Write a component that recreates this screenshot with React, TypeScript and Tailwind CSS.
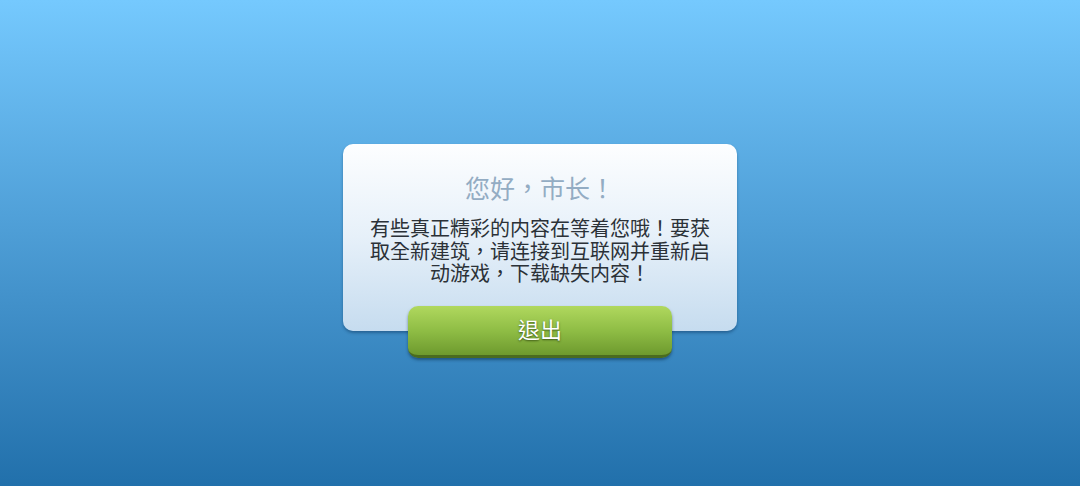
export default function App() {
  return (
    <div
      className="flex h-[486px] w-[1080px] flex-col items-center bg-gradient-to-b from-[#75c9fe] to-[#2170ab] pt-[144px]"
      style={{ fontFamily: '"Noto Sans CJK TC", "Noto Sans CJK SC", sans-serif' }}
    >
      {/* Dialog card */}
      <div className="flex h-[187px] w-[394px] flex-col items-center rounded-[10px] bg-gradient-to-b from-[#fdfeff] via-[#e6f0f9] to-[#c6dcef] pt-[27px] shadow-[0_2px_3px_rgba(10,50,90,0.45)]">
        <div className="text-[25px] leading-[32px] text-[#93acc3]">您好，市长！</div>
        <div className="mt-[14px] text-center text-[20px] leading-[22.5px] text-[#2b3137]">
          有些真正精彩的内容在等着您哦！要获
          <br />
          取全新建筑，请连接到互联网并重新启
          <br />
          动游戏，下载缺失内容！
        </div>
      </div>

      {/* Exit button */}
      <button className="-mt-[25px] flex h-[52px] w-[264px] items-center justify-center rounded-[10px] border-b-[3px] border-[#4a6b1f] bg-gradient-to-b from-[#b0d85e] via-[#8fbd45] to-[#6e9a2e] pb-[5px] shadow-[0_2px_3px_rgba(10,40,70,0.5)]">
        <span className="text-[22px] leading-none text-white [text-shadow:0_1px_2px_rgba(40,60,10,0.8)]">退出</span>
      </button>
    </div>
  )
}
